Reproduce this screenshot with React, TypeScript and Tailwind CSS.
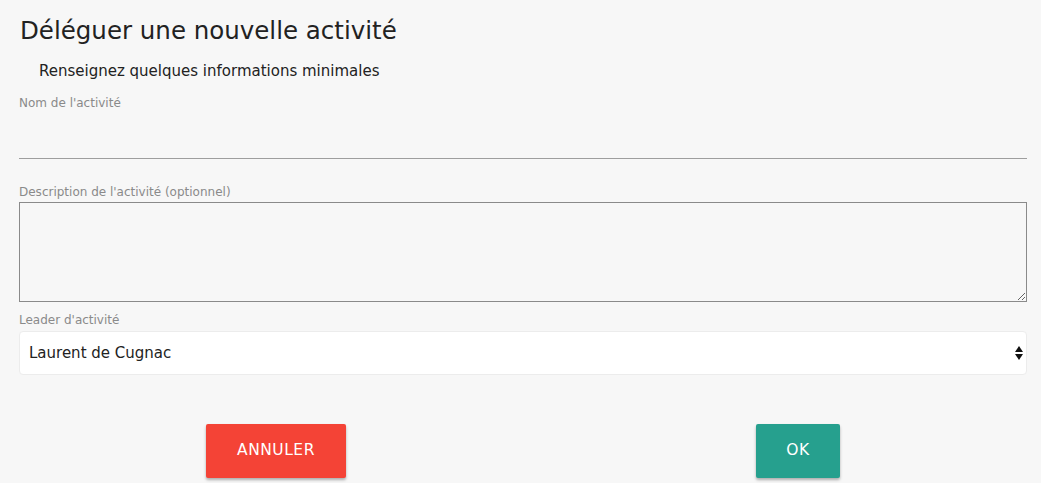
import { useState } from "react";

const font = { fontFamily: "'DejaVu Sans', 'Noto Sans', sans-serif" };

export default function App() {
  const [name, setName] = useState("");
  const [desc, setDesc] = useState("");
  const [leader, setLeader] = useState("Laurent de Cugnac");

  return (
    <div className="min-h-[483px] w-full bg-[#f7f7f7] text-[#222]" style={font}>
      <div className="pl-[19px] pr-[14px] pt-[15px]">
        <h1 className="pl-px text-[24.5px] leading-[32px] text-[#222]">Déléguer une nouvelle activité</h1>
        <p className="mt-[15px] pl-[20px] text-[15px] leading-[18px] text-[#222]">
          Renseignez quelques informations minimales
        </p>

        {/* nom */}
        <label className="mt-[16px] block text-[12px] leading-[14px] text-[#8a8a8a]">Nom de l'activité</label>
        <input
          value={name}
          onChange={(e) => setName(e.target.value)}
          className="block h-[49px] w-full border-b border-[#9e9e9e] bg-transparent outline-none"
        />

        {/* description */}
        <label className="mt-[26px] block text-[12px] leading-[14px] text-[#8a8a8a]">
          Description de l'activité (optionnel)
        </label>
        <textarea
          value={desc}
          onChange={(e) => setDesc(e.target.value)}
          className="mt-[3px] block h-[100px] w-full border border-[#8a8a8a] bg-transparent outline-none"
        />

        {/* leader */}
        <label className="mt-[11px] block text-[12px] leading-[14px] text-[#8a8a8a]">Leader d'activité</label>
        <div className="relative mt-[4px]">
          <select
            value={leader}
            onChange={(e) => setLeader(e.target.value)}
            className="block h-[44px] w-full appearance-none rounded-[4px] border border-[#ececec] bg-white pl-[9px] text-[15px] text-[#222] outline-none"
          >
            <option>Laurent de Cugnac</option>
          </select>
          <svg className="pointer-events-none absolute right-[4px] top-[15px]" width="8" height="14" viewBox="0 0 8 14">
            <path d="M4 0 L8 6 L0 6 Z" fill="#111" />
            <path d="M0 8 L8 8 L4 14 Z" fill="#111" />
          </svg>
        </div>
      </div>

      <div className="mt-[49px] flex">
        <button className="ml-[206px] h-[54px] w-[140px] rounded-[2px] bg-[#f44336] text-[15.5px] tracking-[0.5px] text-white shadow-[0_2px_3px_rgba(0,0,0,0.3)]">
          ANNULER
        </button>
        <button className="ml-[410px] h-[54px] w-[84px] rounded-[2px] bg-[#26a08e] text-[15.5px] tracking-[0.5px] text-white shadow-[0_2px_3px_rgba(0,0,0,0.3)]">
          OK
        </button>
      </div>
    </div>
  );
}
